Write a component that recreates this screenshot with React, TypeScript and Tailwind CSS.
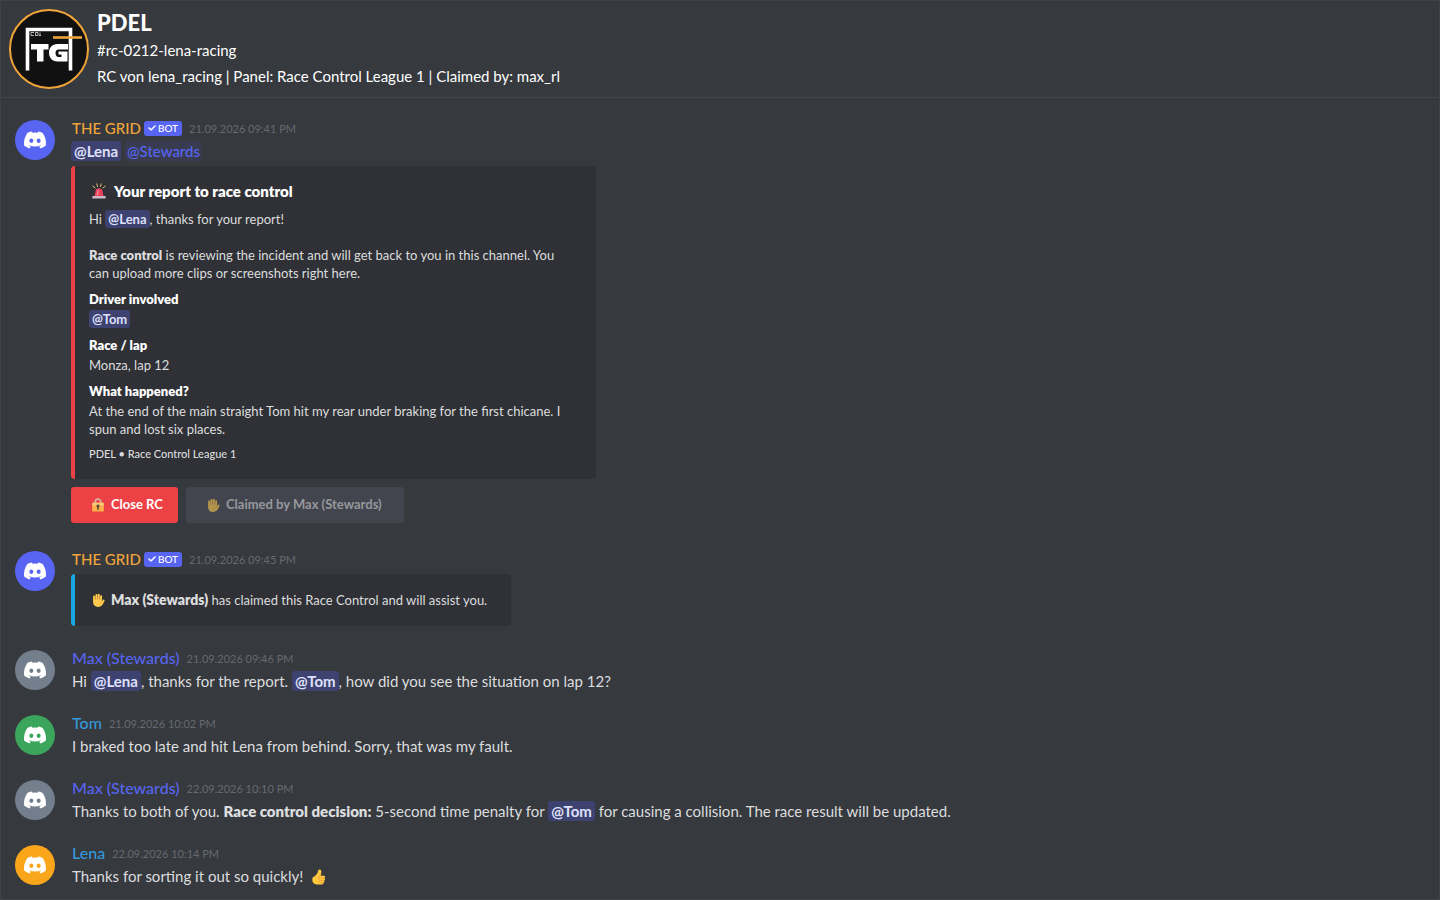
import React from 'react';
import { FaDiscord, FaCheck } from 'react-icons/fa6';

const Mention = ({ children }: { children: React.ReactNode }) => (
  <a href="#mention" className="rounded-[3px] bg-[#3e4270] px-[3px] py-px font-bold text-[#dee0fc]">{children}</a>
);

const HandIcon = ({ className }: { className?: string }) => (
  <svg viewBox="0 0 36 36" className={className} aria-hidden="true">
    <g stroke="#ffcc4d" strokeWidth="5" strokeLinecap="round" fill="none">
      <path d="M8 19V9M14 18V5M20 18V4.500M26 19V8" />
    </g>
    <path fill="#ffcc4d" d="M5.500 16h23v6l2-4c1-2 4.500-2 4.500 1 0 2-2 4-3 7-2 6-6 10-14 10S5.500 31 5.500 24z" />
    <path stroke="#ee9547" strokeWidth="1.400" fill="none" strokeLinecap="round" d="M11 17V9M17 17V6M23 17V8M28.500 22c-4 0-6 3-6 7" />
  </svg>
);

const SirenIcon = ({ className }: { className?: string }) => (
  <svg viewBox="0 0 36 36" className={className} aria-hidden="true">
    <path stroke="#e8c06a" strokeWidth="2.200" strokeLinecap="round" d="M13 2l1.500 6M23 2l-1.500 6M4 7l5 4M32 7l-5 4" />
    <path fill="#f0405c" d="M8 30l2.500-13c.5-3 3.500-4.500 7.500-4.500s7 1.500 7.500 4.500L28 30z" />
    <path fill="#f98b9c" d="M13 27l1.500-10c.3-1.500 1.500-2 3-2L16 27z" />
    <path fill="#ccb9c8" d="M5 29h26c1.500 0 2 1 2 2v4H3v-4c0-1 .5-2 2-2z" />
  </svg>
);

const LockIcon = ({ className }: { className?: string }) => (
  <svg viewBox="0 0 36 36" className={className} aria-hidden="true">
    <path fill="none" stroke="#d3b9a8" strokeWidth="4" d="M11 15V9.500a7 7 0 0 1 14 0V15" />
    <rect x="3" y="12" width="30" height="23" rx="3" fill="#ffb04a" />
    <path fill="#ffc878" d="M3 15c0-2 1-3 3-3h24c2 0 3 1 3 3v4H3z" />
    <path fill="#5b4b3d" d="M18 17a4 4 0 0 1 2 7.500V30h-4v-5.500A4 4 0 0 1 18 17z" />
  </svg>
);

const ThumbIcon = ({ className }: { className?: string }) => (
  <svg viewBox="0 0 36 36" className={className} aria-hidden="true">
    <path fill="#ffc83d" d="M5 18c4-2 8-5 10-10 1-3 1-7 4-7 4 0 5 4 4 8-.5 3-1 4-1 6h7c3 0 4 4 1 5.500 2.500 1.500 2 5-.5 5.500 1.500 2 .5 4.500-2 5 1 2-.5 4-3 4H15C8 35 3 32 3 25c0-3 0-6 2-7z" />
    <path fill="none" stroke="#ee9547" strokeWidth="1.600" strokeLinecap="round" d="M22 15c-3 0-5 2-5 4 0 1.500 1 2 2 2-2 1-2 4 .5 5-1.500 1.500-1 4 1 4.500M21 20.500h9M21 26h8M21 31h6" />
  </svg>
);

const GridLogo = () => (
  <svg viewBox="0 0 80 80" className="size-20 shrink-0" role="img" aria-label="The Grid logo">
    <circle cx="40" cy="40" r="39" fill="#111" stroke="#f0a53a" strokeWidth="2" />
    <path d="M18.500 61.500V20.500H61.500V61.500" fill="none" stroke="#fff" strokeWidth="3.600" />
    <path d="M44 28.500H73" stroke="#f0a53a" strokeWidth="2.600" />
    <path d="M25 23.500h-3v3h3M26.500 23.500h2.500v3h-2.500zM31 27v-3.500M30 26.500h2" fill="none" stroke="#ddd" strokeWidth="0.800" />
    <path d="M22 35H39.500V40.500H34.500V52.500H28V40.500H22Z" fill="#fff" />
    <path d="M59 35H48.500C43 35 40 39 40 43.700S43 52.500 48.500 52.500H58.500V42.500H49.500V45.500H52.500V48H49.500C47.500 48 46.500 46 46.500 44S47.500 40.500 49.500 40.500H59Z" fill="#fff" />
  </svg>
);

type MessageProps = {
  author: string;
  time: string;
  avatarClass: string;
  nameClass: string;
  bot?: boolean;
  children: React.ReactNode;
};

const Message = ({ author, time, avatarClass, nameClass, bot, children }: MessageProps) => (
  <article className="flex items-start gap-4">
    <div className={`mt-[3px] flex size-10 shrink-0 items-center justify-center rounded-full ${avatarClass}`}>
      <FaDiscord className="size-6 text-white" />
    </div>
    <div className="min-w-0 flex-1">
      <div className="flex h-[22px] items-center pl-px">
        <span className={`font-medium ${nameClass}`}>{author}</span>
        {bot && (
          <span className="ml-[3px] flex h-[15px] items-center gap-0.5 rounded-[3px] bg-[#5865f2] px-1 text-[10px] font-medium text-white">
            <FaCheck className="size-2 stroke-white stroke-[40px]" />
            BOT
          </span>
        )}
        <time className="ml-[7px] pt-0.5 text-[11px] font-normal text-[#666a70]">{time}</time>
      </div>
      {children}
    </div>
  </article>
);

const MessageText = ({ children }: { children: React.ReactNode }) => (
  <p className="pl-px leading-[25px]">{children}</p>
);

const Field = ({ name, children }: { name: string; children: React.ReactNode }) => (
  <div className="mt-2">
    <h3 className="font-extrabold text-white">{name}</h3>
    <p className="mt-0.5">{children}</p>
  </div>
);

const App = () => {
  return (
    <div className="min-h-screen border border-[#3f4247] bg-[#36393e] font-['Lato',sans-serif] text-[15px] text-[#dcddde]">
      <header className="flex gap-2 border-b border-[#42454a] p-2 text-white">
        <GridLogo />
        <div className="leading-[26px]">
          <h1 className="text-[22px] leading-7 font-black">PDEL</h1>
          <p>#rc-0212-lena-racing</p>
          <p>RC von lena_racing | Panel: Race Control League 1 | Claimed by: max_rl</p>
        </div>
      </header>

      <main className="flex flex-col gap-[18px] px-3.5 pt-[19px]">
        <Message author="THE GRID" time="21.09.2026 09:41 PM" avatarClass="bg-[#5865f2]" nameClass="text-[15px] text-[#f0a53a]" bot>
          <p className="leading-[25px]">
            <Mention>@Lena</Mention>{' '}
            <a href="#stewards" className="rounded-[3px] bg-[#393c50] px-0.5 py-px font-medium text-[#5865f2]">@Stewards</a>
          </p>
          <section className="mt-0.5 max-w-[525px] rounded-sm border-l-4 border-[#ed4245] bg-[#2f3136] px-3.5 pt-[15px] pb-[17px] text-[13px] leading-[18px]">
            <h2 className="flex items-center gap-[7px] pl-0.5 text-[15px] leading-5 font-extrabold text-white">
              <SirenIcon className="size-4" />
              Your report to race control
            </h2>
            <p className="mt-[9px]">Hi <Mention>@Lena</Mention>, thanks for your report!</p>
            <p className="mt-[18px] pr-5">
              <strong className="font-extrabold">Race control</strong> is reviewing the incident and will get back to
              you in this channel. You can upload more clips or screenshots right here.
            </p>
            <Field name="Driver involved"><Mention>@Tom</Mention></Field>
            <Field name="Race / lap">Monza, lap 12</Field>
            <Field name="What happened?">
              At the end of the main straight Tom hit my rear under braking for the first chicane. I spun and lost six
              places.
            </Field>
            <footer className="mt-2 text-[11px] leading-4 font-medium">PDEL • Race Control League 1</footer>
          </section>
          <div className="mt-2 flex gap-2 pb-[7px] text-[13px] font-bold">
            <button type="button" className="flex h-9 items-center gap-1.5 rounded-[3px] bg-[#ed4245] pr-[15px] pl-5 text-white">
              <LockIcon className="size-3.5" />
              Close RC
            </button>
            <button type="button" disabled className="flex h-9 items-center gap-1.5 rounded-[3px] bg-[#42454d] pr-[22px] pl-5 text-[#96989c]">
              <HandIcon className="size-3.5 opacity-60" />
              Claimed by Max (Stewards)
            </button>
          </div>
        </Message>

        <Message author="THE GRID" time="21.09.2026 09:45 PM" avatarClass="bg-[#5865f2]" nameClass="text-[15px] text-[#f0a53a]" bot>
          <section className="mt-1 mb-[3px] flex w-fit items-center gap-1.5 rounded-sm border-l-4 border-[#1aa7e0] bg-[#2f3136] py-4 pr-6 pl-4 text-[13px] leading-5">
            <HandIcon className="size-3.5" />
            <p>
              <strong className="text-sm leading-5 font-extrabold">Max (Stewards)</strong> has claimed this Race Control
              and will assist you.
            </p>
          </section>
        </Message>

        <Message author="Max (Stewards)" time="21.09.2026 09:46 PM" avatarClass="bg-[#747f8d]" nameClass="text-base text-[#5865f2]">
          <MessageText>
            Hi <Mention>@Lena</Mention>, thanks for the report. <Mention>@Tom</Mention>, how did you see the situation on
            lap 12?
          </MessageText>
        </Message>

        <Message author="Tom" time="21.09.2026 10:02 PM" avatarClass="bg-[#3ba55c]" nameClass="text-base text-[#3498db]">
          <MessageText>I braked too late and hit Lena from behind. Sorry, that was my fault.</MessageText>
        </Message>

        <Message author="Max (Stewards)" time="22.09.2026 10:10 PM" avatarClass="bg-[#747f8d]" nameClass="text-base text-[#5865f2]">
          <MessageText>
            Thanks to both of you. <strong className="font-extrabold">Race control decision:</strong> 5-second time
            penalty for <Mention>@Tom</Mention> for causing a collision. The race result will be updated.
          </MessageText>
        </Message>

        <Message author="Lena" time="22.09.2026 10:14 PM" avatarClass="bg-[#faa61a]" nameClass="text-base text-[#3498db]">
          <MessageText>
            Thanks for sorting it out so quickly! <ThumbIcon className="ml-1 inline size-4 align-[-3px]" />
          </MessageText>
        </Message>
      </main>
    </div>
  );
};

export default App;
